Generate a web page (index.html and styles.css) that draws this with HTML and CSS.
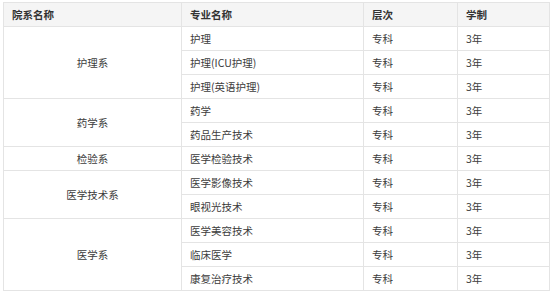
FILE: index.html
```html
<!DOCTYPE html>
<html lang="zh">
<head>
<meta charset="utf-8">
<link rel="stylesheet" href="styles.css">
</head>
<body>
<table class="majors">
  <colgroup>
    <col class="c1"><col class="c2"><col class="c3"><col class="c4">
  </colgroup>
  <thead>
    <tr><th>院系名称</th><th>专业名称</th><th>层次</th><th>学制</th></tr>
  </thead>
  <tbody>
    <tr><td class="dept" rowspan="3">护理系</td><td>护理</td><td>专科</td><td>3年</td></tr>
    <tr><td>护理(ICU护理)</td><td>专科</td><td>3年</td></tr>
    <tr><td>护理(英语护理)</td><td>专科</td><td>3年</td></tr>
    <tr><td class="dept" rowspan="2">药学系</td><td>药学</td><td>专科</td><td>3年</td></tr>
    <tr><td>药品生产技术</td><td>专科</td><td>3年</td></tr>
    <tr><td class="dept">检验系</td><td>医学检验技术</td><td>专科</td><td>3年</td></tr>
    <tr><td class="dept" rowspan="2">医学技术系</td><td>医学影像技术</td><td>专科</td><td>3年</td></tr>
    <tr><td>眼视光技术</td><td>专科</td><td>3年</td></tr>
    <tr><td class="dept" rowspan="3">医学系</td><td>医学美容技术</td><td>专科</td><td>3年</td></tr>
    <tr><td>临床医学</td><td>专科</td><td>3年</td></tr>
    <tr><td>康复治疗技术</td><td>专科</td><td>3年</td></tr>
  </tbody>
</table>
</body>
</html>
```
FILE: styles.css
```css
html, body {
  margin: 0;
  padding: 0;
  background: #ffffff;
}
body {
  padding: 2px 0 0 3px;
  font-family: "Noto Sans CJK SC", "Liberation Sans", sans-serif;
  font-size: 10.5px;
  color: #3c3c3c;
}
.majors {
  border-collapse: collapse;
  table-layout: fixed;
  width: 546px;
}
.c1 { width: 178px; }
.c2 { width: 182px; }
.c3 { width: 94px; }
.c4 { width: 92px; }
.majors th,
.majors td {
  border: 1px solid #e4e4e4;
  height: 23px;
  padding: 0 8px;
  text-align: left;
  vertical-align: middle;
  line-height: 13px;
  white-space: nowrap;
}
.majors th {
  background: #f5f5f5;
  font-weight: bold;
  color: #333333;
}
.majors td.dept {
  text-align: center;
}
```
